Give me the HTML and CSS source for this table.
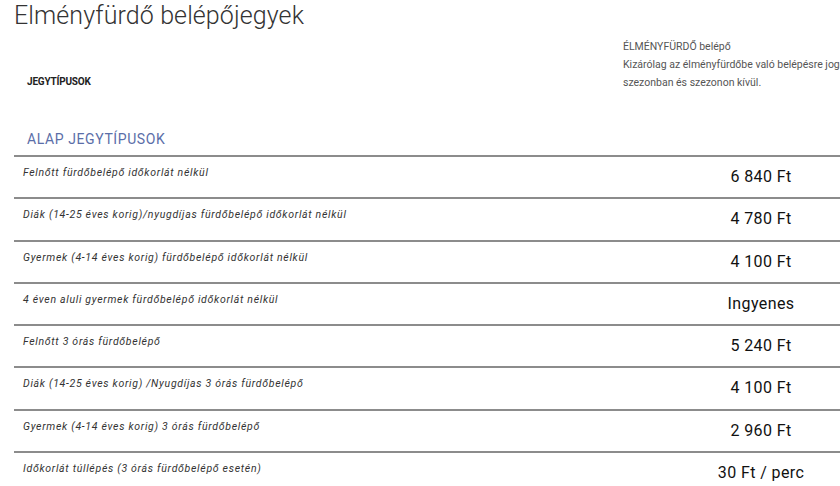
FILE: index.html
```html
<!DOCTYPE html>
<html lang="hu">
<head>
<meta charset="utf-8">
<link rel="stylesheet" href="styles.css">
</head>
<body>
<div class="page">
  <h1 class="title">Elményfürdő belépőjegyek</h1>
  <div class="head">
    <div class="head-left">JEGYTÍPUSOK</div>
    <div class="head-right">
      <div>ÉLMÉNYFÜRDŐ belépő</div>
      <div>Kizárólag az élményfürdőbe való belépésre jogosít</div>
      <div>szezonban és szezonon kívül.</div>
    </div>
  </div>
  <div class="section">ALAP JEGYTÍPUSOK</div>
  <div class="table">
    <div class="row"><div class="name">Felnőtt fürdőbelépő időkorlát nélkül</div><div class="price">6 840 Ft</div></div>
    <div class="row"><div class="name">Diák (14-25 éves korig)/nyugdíjas fürdőbelépő időkorlát nélkül</div><div class="price">4 780 Ft</div></div>
    <div class="row"><div class="name">Gyermek (4-14 éves korig) fürdőbelépő időkorlát nélkül</div><div class="price">4 100 Ft</div></div>
    <div class="row"><div class="name">4 éven aluli gyermek fürdőbelépő időkorlát nélkül</div><div class="price">Ingyenes</div></div>
    <div class="row"><div class="name">Felnőtt 3 órás fürdőbelépő</div><div class="price">5 240 Ft</div></div>
    <div class="row"><div class="name">Diák (14-25 éves korig) /Nyugdíjas 3 órás fürdőbelépő</div><div class="price">4 100 Ft</div></div>
    <div class="row"><div class="name">Gyermek (4-14 éves korig) 3 órás fürdőbelépő</div><div class="price">2 960 Ft</div></div>
    <div class="row"><div class="name">Időkorlát túllépés (3 órás fürdőbelépő esetén)</div><div class="price">30 Ft / perc</div></div>
  </div>
</div>
</body>
</html>
```
FILE: styles.css
```css
html, body {
  margin: 0;
  padding: 0;
  background: #fff;
  overflow: hidden;
}
body {
  font-family: "Roboto", "Liberation Sans", sans-serif;
  color: #333;
  width: 840px;
  height: 486px;
}
.page {
  padding-left: 14px;
}
.title {
  margin: 0;
  padding-top: 1px;
  font-size: 25px;
  line-height: 30px;
  font-weight: 300;
  color: #333;
  letter-spacing: 0.1px;
}
.head {
  display: flex;
  height: 82px;
}
.head-left {
  flex: none;
  width: 596px;
  padding-left: 13px;
  padding-top: 45px;
  font-size: 10px;
  font-weight: 700;
  color: #222;
  letter-spacing: -0.2px;
}
.head-right {
  flex: none;
  padding-top: 7px;
  font-size: 10.5px;
  line-height: 18px;
  color: #555;
  white-space: nowrap;
}
.section {
  padding-left: 13px;
  height: 42px;
  font-size: 14px;
  line-height: 18px;
  color: #5b6ea8;
  letter-spacing: 0.6px;
  box-sizing: border-box;
  padding-top: 17px;
}
.table {
  width: 840px;
}
.row {
  display: flex;
  height: 42.3px;
  box-sizing: border-box;
  border-top: 2px solid #8c8c8c;
}
.name {
  flex: 1;
  padding-left: 9px;
  padding-top: 9px;
  font-size: 10.5px;
  font-style: italic;
  letter-spacing: 0.7px;
  color: #333;
}
.price {
  width: 186px;
  text-align: center;
  padding-top: 10px;
  font-size: 16px;
  font-weight: 400;
  color: #111;
  letter-spacing: 0.4px;
}
```
